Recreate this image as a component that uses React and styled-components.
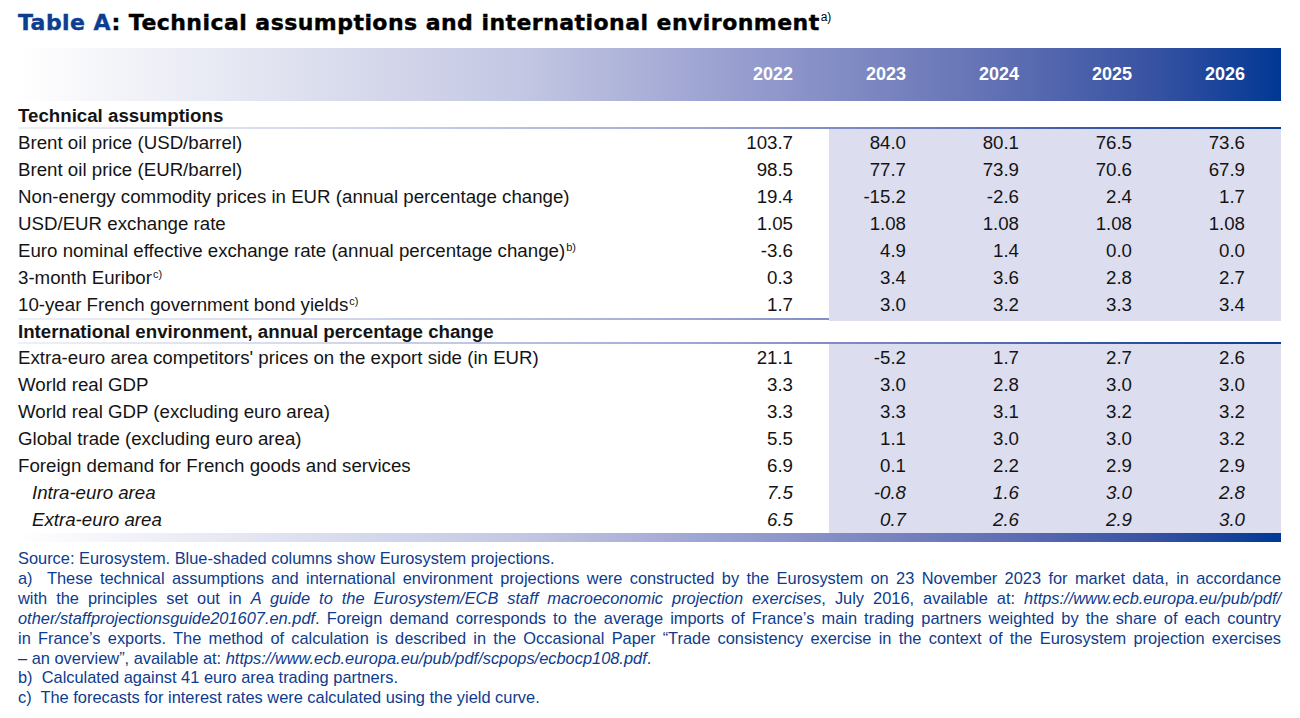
import React from 'react';
import styled, { createGlobalStyle } from 'styled-components';

const GlobalStyle = createGlobalStyle`
  body {
    margin: 0;
    background: #ffffff;
    font-family: "Liberation Sans", Arial, sans-serif;
  }
`;

const COLS = '698px repeat(5, 113px)';
const BAND = 'linear-gradient(90deg, #ffffff 0%, #e4e6f2 18%, #c3c7e3 40%, #959cce 58%, #6674b6 76%, #3752a2 90%, #003894 100%)';
const RULE = 'linear-gradient(90deg, #eef0f7 0%, #d3d7ec 25%, #a7aed8 50%, #6d7bbd 72%, #2f51a2 88%, #0a3d94 100%)';

const technical = [
  { label: 'Brent oil price (USD/barrel)', values: ['103.7', '84.0', '80.1', '76.5', '73.6'] },
  { label: 'Brent oil price (EUR/barrel)', values: ['98.5', '77.7', '73.9', '70.6', '67.9'] },
  { label: 'Non-energy commodity prices in EUR (annual percentage change)', values: ['19.4', '-15.2', '-2.6', '2.4', '1.7'] },
  { label: 'USD/EUR exchange rate', values: ['1.05', '1.08', '1.08', '1.08', '1.08'] },
  { label: 'Euro nominal effective exchange rate (annual percentage change)', note: 'b)', values: ['-3.6', '4.9', '1.4', '0.0', '0.0'] },
  { label: '3-month Euribor', note: 'c)', values: ['0.3', '3.4', '3.6', '2.8', '2.7'] },
  { label: '10-year French government bond yields', note: 'c)', values: ['1.7', '3.0', '3.2', '3.3', '3.4'] },
];

const international = [
  { label: "Extra-euro area competitors' prices on the export side (in EUR)", values: ['21.1', '-5.2', '1.7', '2.7', '2.6'] },
  { label: 'World real GDP', values: ['3.3', '3.0', '2.8', '3.0', '3.0'] },
  { label: 'World real GDP (excluding euro area)', values: ['3.3', '3.3', '3.1', '3.2', '3.2'] },
  { label: 'Global trade (excluding euro area)', values: ['5.5', '1.1', '3.0', '3.0', '3.2'] },
  { label: 'Foreign demand for French goods and services', values: ['6.9', '0.1', '2.2', '2.9', '2.9'] },
  { label: 'Intra-euro area', sub: true, values: ['7.5', '-0.8', '1.6', '3.0', '2.8'] },
  { label: 'Extra-euro area', sub: true, values: ['6.5', '0.7', '2.6', '2.9', '3.0'] },
];

const years = ['2022', '2023', '2024', '2025', '2026'];

const DataRows = ({ rows }) =>
  rows.map((row) => (
    <Row key={row.label} $italic={row.sub}>
      <Label $indent={row.sub}>
        {row.label}
        {row.note && <Sup>{row.note}</Sup>}
      </Label>
      {row.values.map((v, i) => (
        <Value key={i} $shaded={i > 0}>{v}</Value>
      ))}
    </Row>
  ));

const App = () => {
  return (
    <Page>
      <GlobalStyle />
      <Title>
        <Blue>Table A</Blue>: Technical assumptions and international environment<TitleSup>a)</TitleSup>
      </Title>

      <HeadRow>
        <span />
        {years.map((y) => (
          <Year key={y}>{y}</Year>
        ))}
      </HeadRow>

      <Section $first>Technical assumptions</Section>
      <Rule />
      <DataRows rows={technical} />
      <Rule />
      <Section>International environment, annual percentage change</Section>
      <Rule />
      <DataRows rows={international} />
      <BottomBar />

      <Notes>
        <p>Source: Eurosystem. Blue-shaded columns show Eurosystem projections.</p>
        <Line $full>
          a)&nbsp; These technical assumptions and international environment projections were constructed by the Eurosystem on 23 November 2023 for market data, in accordance
        </Line>
        <Line $full>
          with the principles set out in <i>A guide to the Eurosystem/ECB staff macroeconomic projection exercises</i>, July 2016, available at: <i>https://www.ecb.europa.eu/pub/pdf/</i>
        </Line>
        <Line $full>
          <i>other/staffprojectionsguide201607.en.pdf</i>. Foreign demand corresponds to the average imports of France’s main trading partners weighted by the share of each country
        </Line>
        <Line $full>
          in France’s exports. The method of calculation is described in the Occasional Paper “Trade consistency exercise in the context of the Eurosystem projection exercises
        </Line>
        <Line>
          – an overview”, available at: <i>https://www.ecb.europa.eu/pub/pdf/scpops/ecbocp108.pdf</i>.
        </Line>
        <p>b)&nbsp; Calculated against 41 euro area trading partners.</p>
        <p>c)&nbsp; The forecasts for interest rates were calculated using the yield curve.</p>
      </Notes>
    </Page>
  );
};

const Page = styled.div`
  width: 1263px;
  padding: 8px 0 0 18px;
  color: #141414;
`

const Title = styled.h1`
  margin: 0 0 12px;
  height: 28px;
  font-family: "DejaVu Sans", "Liberation Sans", sans-serif;
  font-size: 22px;
  line-height: 30px;
  letter-spacing: 0.45px;
  font-weight: 700;
  color: #000;
  -webkit-text-stroke: 0.4px currentColor;
  white-space: nowrap;
`

const Blue = styled.span`
  color: #0b3d91;
`

const TitleSup = styled.span`
  position: relative;
  top: -9px;
  margin-left: 1px;
  font-family: "Liberation Sans", Arial, sans-serif;
  font-size: 12px;
  letter-spacing: 0;
  -webkit-text-stroke: 0;
  font-weight: 400;
`

const Row = styled.div`
  display: grid;
  grid-template-columns: ${COLS};
  height: 27px;
  font-size: 18.7px;
  line-height: 27px;
  font-style: ${props => (props.$italic ? 'italic' : 'normal')};
`

const HeadRow = styled(Row)`
  height: 53px;
  line-height: 53px;
  font-size: 18px;
  background: ${BAND};
`

const Year = styled.span`
  text-align: right;
  padding-right: 36px;
  color: #ffffff;
  font-weight: 700;
`

const Label = styled.span`
  padding-left: ${props => (props.$indent ? '14px' : '0')};
  white-space: nowrap;
`

const Value = styled.span`
  text-align: right;
  padding-right: 36px;
  background: ${props => (props.$shaded ? '#dcdeef' : 'transparent')};
`

const Sup = styled.span`
  position: relative;
  top: -6px;
  margin-left: 1px;
  font-size: 11px;
`

const Section = styled.div`
  height: ${props => (props.$first ? '26px' : '22px')};
  line-height: ${props => (props.$first ? '29px' : '23px')};
  font-size: 18.7px;
  font-weight: 700;
`

const Rule = styled.div`
  height: 2px;
  background: ${RULE};
`

const BottomBar = styled.div`
  height: 9px;
  background: ${BAND};
`

const Notes = styled.div`
  margin-top: 7px;
  color: #0d3b8e;
  font-size: 16.4px;
  line-height: 19.9px;

  p {
    margin: 0;
  }
`

const Line = styled.div`
  text-align: ${props => (props.$full ? 'justify' : 'left')};
  text-align-last: ${props => (props.$full ? 'justify' : 'left')};
  white-space: nowrap;
  ${props => props.$full && 'white-space: normal;'}
`

export default App;
